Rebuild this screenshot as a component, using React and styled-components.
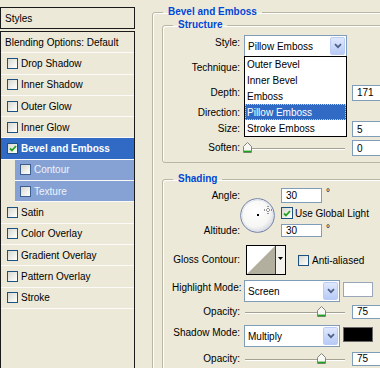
import React from 'react';
import styled, { createGlobalStyle } from 'styled-components';

const Global = createGlobalStyle`
  html, body { margin: 0; padding: 0; background: #ece9d8; }
  body { font-family: "Liberation Sans", Arial, sans-serif; font-size: 10px; color: #000; }
  * { box-sizing: border-box; }
`;

const Frame = styled.div`
  width: 380px;
  height: 368px;
  overflow: hidden;
  display: flex;
  background: #ece9d8;
`;

/* ---------- left styles list ---------- */
const Sidebar = styled.div`
  width: 135px;
  flex: none;
  padding-top: 7px;
  display: flex;
  flex-direction: column;
  height: 390px;
`;

const TitleBox = styled.div`
  height: 22px;
  border: 1px solid #1a1a1a;
  display: flex;
  align-items: center;
  padding-left: 4px;
`;

const ListBox = styled.div`
  flex: 1;
  margin-top: 2px;
  border: 1px solid #1a1a1a;
  display: flex;
  flex-direction: column;
`;

const Item = styled.div`
  height: 21.3px;
  flex: none;
  border-bottom: 1px solid #fbfaf6;
  display: flex;
  align-items: center;
  gap: 3px;
  padding-left: ${(p) => (p.$sub ? 5 : p.$plain ? 4 : 6)}px;
  margin-left: ${(p) => (p.$sub ? 14 : 0)}px;
  background: ${(p) => (p.$sel ? '#316ac5' : p.$sub ? '#86a2d4' : 'transparent')};
  color: ${(p) => (p.$sel ? '#fff' : p.$sub ? '#eef2fb' : '#000')};
  font-weight: ${(p) => (p.$sel ? 700 : 400)};
  white-space: nowrap;
`;

const Box = styled.span`
  flex: none;
  width: ${(p) => p.$size}px;
  height: ${(p) => p.$size}px;
  border: 1px solid ${(p) => (p.$dim ? '#3d5f8f' : '#1c5180')};
  background: linear-gradient(135deg, #d8d8d0 0%, #f2f2ee 65%, #ffffff 100%);
  display: flex;
  align-items: center;
  justify-content: center;
  margin-left: ${(p) => p.$ml || 0}px;
`;

const Tick = () => (
  <svg width="8" height="7" viewBox="0 0 8 7">
    <path d="M1 3.5 L3 5.5 L7 1" fill="none" stroke="#21a121" strokeWidth="1.8" />
  </svg>
);

const CheckBox = ({ size = 11, checked, dim, ml }) => (
  <Box $size={size} $dim={dim} $ml={ml}>
    {checked ? <Tick /> : null}
  </Box>
);

/* ---------- right panel ---------- */
const Main = styled.div`
  flex: 1;
  min-width: 0;
  padding: 6px 0 0 17px;
  overflow: hidden;
`;

const Group = styled.fieldset`
  margin: ${(p) => p.$mt || 0}px 0 0 0;
  padding: ${(p) => p.$pad};
  width: ${(p) => p.$w}px;
  min-width: 0;
  border: 1px solid #bab6a5;
  border-radius: 3px;
  box-shadow: inset 1px 1px 0 #fff;
`;

const Legend = styled.legend`
  padding: 0 5px;
  margin-left: ${(p) => p.$ml}px;
  color: #0046d5;
  font-weight: 700;
  font-size: 10px;
  line-height: 12px;
`;

const Row = styled.div`
  display: flex;
  align-items: ${(p) => (p.$top ? 'flex-start' : 'center')};
  height: ${(p) => p.$h}px;
  margin-top: ${(p) => p.$mt || 0}px;
`;

const Label = styled.div`
  width: 68px;
  flex: none;
  text-align: right;
  line-height: 12px;
  margin-right: 4px;
  margin-top: ${(p) => (p.$top ? 2 : 0)}px;
  white-space: nowrap;
`;

const Spacer = styled.div`
  flex: none;
  width: 108px;
`;

const Select = styled.div`
  position: relative;
  flex: none;
  width: ${(p) => p.$w}px;
  height: 22px;
  border: 1px solid #7f9db9;
  background: #fff;
  display: flex;
  align-items: center;
  justify-content: space-between;
  padding: 1px 1px 1px 3px;
  white-space: nowrap;
`;

const DropBtn = styled.span`
  width: 15px;
  height: 18px;
  border: 1px solid #bccdf5;
  border-radius: 2px;
  background: linear-gradient(#dfe8fd, #b8cbf6);
  display: flex;
  align-items: center;
  justify-content: center;
`;

const Chevron = () => (
  <svg width="8" height="6" viewBox="0 0 8 6">
    <path d="M1 1.2 L4 4.2 L7 1.2" fill="none" stroke="#4d6185" strokeWidth="1.7" />
  </svg>
);

const List = styled.div`
  position: absolute;
  top: 100%;
  left: -1px;
  width: 103px;
  border: 1px solid #000;
  background: #fff;
  z-index: 5;
`;

const Option = styled.div`
  height: 15.8px;
  display: flex;
  align-items: center;
  padding-left: 2px;
  background: ${(p) => (p.$sel ? '#316ac5' : '#fff')};
  color: ${(p) => (p.$sel ? '#fff' : '#000')};
  outline: ${(p) => (p.$sel ? '1px dotted #e9c873' : 'none')};
  outline-offset: -1px;
`;

const Field = styled.div`
  flex: none;
  width: ${(p) => p.$w || 40}px;
  height: ${(p) => p.$h || 16}px;
  border: 1px solid #7f9db9;
  background: #fff;
  display: flex;
  align-items: center;
  padding-left: 4px;
  margin-left: ${(p) => p.$ml || 0}px;
`;

const Degree = styled.span`
  align-self: flex-start;
  margin-left: 4px;
  line-height: 10px;
`;

const SliderWrap = styled.div`
  position: relative;
  flex: none;
  width: 103px;
  height: 16px;
  margin-right: 5px;
`;

const Track = styled.div`
  position: absolute;
  left: 1px;
  right: 2px;
  top: 8px;
  height: 2px;
  border-top: 1px solid #a5a293;
  border-bottom: 1px solid #fff;
`;

const ThumbWrap = styled.div`
  position: absolute;
  top: 2px;
  width: 9px;
  height: 11px;
  line-height: 0;
`;

const Thumb = () => (
  <svg width="9" height="11" viewBox="0 0 9 11">
    <path d="M0.5 4.5 L4.5 0.5 L8.5 4.5 V10.5 H0.5 Z" fill="#f7f7f3" stroke="#84837a" />
    <rect x="1" y="8.6" width="7" height="1.6" fill="#21a121" />
  </svg>
);

const Slider = ({ value }) => (
  <SliderWrap>
    <Track />
    <ThumbWrap style={{ left: `${value * 0.987 - 1}px` }}>
      <Thumb />
    </ThumbWrap>
  </SliderWrap>
);

const SelectBox = ({ w, text, children }) => (
  <Select $w={w}>
    <span>{text}</span>
    <DropBtn>
      <Chevron />
    </DropBtn>
    {children}
  </Select>
);

const AngleBlock = styled.div`
  display: flex;
  align-items: flex-start;
  height: 52px;
`;

const Stack = styled.div`
  display: grid;
  grid-template-rows: 17px 18px 17px;
  align-items: center;
  flex: none;
  width: ${(p) => p.$w || 'auto'};
  margin-left: ${(p) => p.$ml || 0}px;
`;

const StackRow = styled.div`
  display: flex;
  align-items: center;
`;

const DialWrap = styled.div`
  flex: none;
  width: 35px;
  height: 35px;
  margin-top: 11px;
  line-height: 0;
`;

const Dial = () => (
  <DialWrap>
    <svg width="35" height="35" viewBox="0 0 35 35">
      <defs>
        <radialGradient id="dialg" cx="42%" cy="38%" r="65%">
          <stop offset="0" stopColor="#ffffff" />
          <stop offset="0.7" stopColor="#f6f6f4" />
          <stop offset="1" stopColor="#d4d6df" />
        </radialGradient>
      </defs>
      <circle cx="17.5" cy="17.5" r="16.8" fill="url(#dialg)" stroke="#6f7fa3" strokeWidth="1" />
      <circle cx="17.5" cy="17.5" r="15.6" fill="none" stroke="#dfe3ee" strokeWidth="1" />
      <rect x="17" y="16" width="2" height="2" fill="#000" />
      <path d="M28 8 V11 M28 13 V16 M24 12 H27 M29 12 H32" stroke="#333" strokeWidth="1" strokeDasharray="1 1" />
    </svg>
  </DialWrap>
);

const ContourBox = styled.div`
  flex: none;
  display: flex;
  width: 40px;
  height: 30px;
  border: 1px solid #000;
  margin-left: 2px;
  line-height: 0;
`;

const ContourStrip = styled.div`
  flex: 1;
  border-left: 1px solid #3a3a3a;
  background: #f4f3ee;
  display: flex;
  justify-content: center;
  padding-top: 11px;
`;

const CheckLabel = styled.span`
  margin-left: ${(p) => p.$gap}px;
  white-space: nowrap;
`;

const Swatch = styled.div`
  flex: none;
  width: 30px;
  height: 15px;
  margin-left: 3px;
  margin-top: 2px;
  background: ${(p) => p.$color};
  border: 1px solid ${(p) => (p.$color === '#000' ? '#6a6a6a' : '#9aa7bb')};
`;

const layerItems = [
  { name: 'Drop Shadow' },
  { name: 'Inner Shadow' },
  { name: 'Outer Glow' },
  { name: 'Inner Glow' },
  { name: 'Bevel and Emboss', sel: true, checked: true },
  { name: 'Contour', sub: true },
  { name: 'Texture', sub: true },
  { name: 'Satin' },
  { name: 'Color Overlay' },
  { name: 'Gradient Overlay' },
  { name: 'Pattern Overlay' },
  { name: 'Stroke' },
];

const styleOptions = ['Outer Bevel', 'Inner Bevel', 'Emboss', 'Pillow Emboss', 'Stroke Emboss'];

export default function App() {
  return (
    <Frame>
      <Global />
      <Sidebar>
        <TitleBox>Styles</TitleBox>
        <ListBox>
          <Item $plain>Blending Options: Default</Item>
          {layerItems.map((it) => (
            <Item key={it.name} $sel={it.sel} $sub={it.sub}>
              <CheckBox size={11} checked={it.checked} dim={it.sub} />
              <span>{it.name}</span>
            </Item>
          ))}
        </ListBox>
      </Sidebar>

      <Main>
        <Group $w={260} $pad="1px 0 0 9px">
          <Legend $ml={1}>Bevel and Emboss</Legend>

          <Group $w={240} $pad="4px 0 6px 9px">
            <Legend $ml={1}>Structure</Legend>
            <Row $h={22} $top>
              <Label $top>Style:</Label>
              <SelectBox w={103} text="Pillow Emboss">
                <List>
                  {styleOptions.map((o) => (
                    <Option key={o} $sel={o === 'Pillow Emboss'}>
                      {o}
                    </Option>
                  ))}
                </List>
              </SelectBox>
            </Row>
            <Row $h={20} $mt={1}>
              <Label>Technique:</Label>
            </Row>
            <Row $h={17} $mt={6}>
              <Label>Depth:</Label>
              <Spacer />
              <Field $w={40} $h={16}>171</Field>
            </Row>
            <Row $h={16} $mt={4}>
              <Label>Direction:</Label>
            </Row>
            <Row $h={16}>
              <Label>Size:</Label>
              <Spacer />
              <Field $w={40} $h={16}>5</Field>
            </Row>
            <Row $h={16} $mt={3}>
              <Label>Soften:</Label>
              <Slider value={0} />
              <Field $w={40} $h={16}>0</Field>
            </Row>
          </Group>

          <Group $w={240} $mt={10} $pad="2px 0 20px 9px">
            <Legend $ml={1}>Shading</Legend>
            <AngleBlock>
              <Stack $w="68px">
                <Label>Angle:</Label>
                <span />
                <Label>Altitude:</Label>
              </Stack>
              <Dial />
              <Stack $ml={6}>
                <StackRow>
                  <Field $w={41} $h={15}>30</Field>
                  <Degree>°</Degree>
                </StackRow>
                <StackRow>
                  <CheckBox size={12} checked />
                  <CheckLabel $gap={2}>Use Global Light</CheckLabel>
                </StackRow>
                <StackRow>
                  <Field $w={41} $h={13}>30</Field>
                  <Degree>°</Degree>
                </StackRow>
              </Stack>
            </AngleBlock>

            <Row $h={30} $mt={6}>
              <Label>Gloss Contour:</Label>
              <ContourBox>
                <svg width="28" height="28" viewBox="0 0 28 28">
                  <rect width="28" height="28" fill="#fff" />
                  <polygon points="0,28 28,0 28,28" fill="#b3af9f" />
                </svg>
                <ContourStrip>
                  <svg width="5" height="3" viewBox="0 0 5 3">
                    <polygon points="0,0 5,0 2.5,3" fill="#000" />
                  </svg>
                </ContourStrip>
              </ContourBox>
              <CheckBox size={11} ml={12} />
              <CheckLabel $gap={3}>Anti-aliased</CheckLabel>
            </Row>

            <Row $h={22} $mt={5} $top>
              <Label $top>Highlight Mode:</Label>
              <SelectBox w={96} text="Screen" />
              <Swatch $color="#fff" />
            </Row>
            <Row $h={17} $mt={1}>
              <Label>Opacity:</Label>
              <Slider value={75} />
              <Field $w={40} $h={14}>75</Field>
            </Row>
            <Row $h={22} $mt={5} $top>
              <Label $top>Shadow Mode:</Label>
              <SelectBox w={96} text="Multiply" />
              <Swatch $color="#000" />
            </Row>
            <Row $h={17} $mt={3}>
              <Label>Opacity:</Label>
              <Slider value={75} />
              <Field $w={40} $h={14}>75</Field>
            </Row>
          </Group>
        </Group>
      </Main>
    </Frame>
  );
}
